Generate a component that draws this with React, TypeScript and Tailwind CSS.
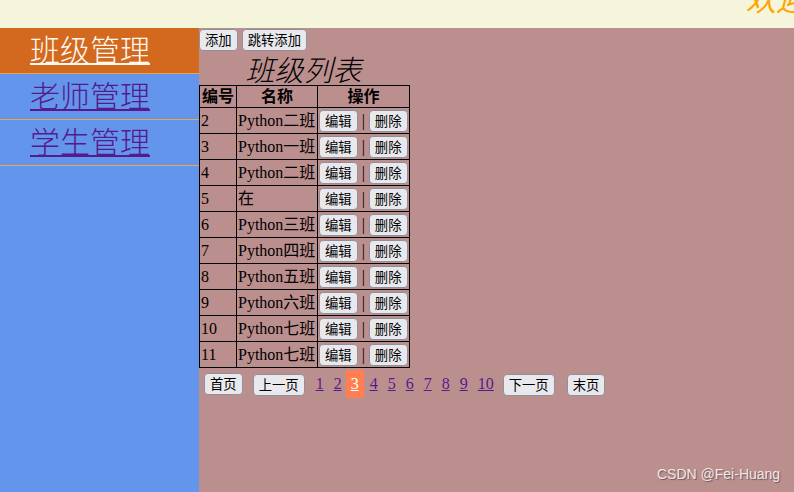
import React from "react";

const rows: [number, string][] = [
  [2, "Python二班"],
  [3, "Python一班"],
  [4, "Python二班"],
  [5, "在"],
  [6, "Python三班"],
  [7, "Python四班"],
  [8, "Python五班"],
  [9, "Python六班"],
  [10, "Python七班"],
  [11, "Python七班"],
];

const serif = "font-['Liberation_Serif','Noto_Sans_CJK_SC',serif]";
const sans = "font-['Noto_Sans_CJK_SC','Liberation_Sans',sans-serif]";

function Btn({ children }: { children: React.ReactNode }) {
  return (
    <button
      className={`${sans} h-[22px] px-[5px] text-[13.33px] leading-[18px] text-black bg-[#e9e9ed] border border-[#8f8f9d] rounded-[4px] align-middle`}
    >
      {children}
    </button>
  );
}

export default function App() {
  return (
    <div className="w-[794px] h-[492px] flex flex-col overflow-hidden">
      <div className="relative h-[28px] bg-[#f5f5dc] overflow-hidden shrink-0">
        <span
          className={`absolute left-[746px] top-[-24px] whitespace-nowrap text-[30px] italic text-[#ffa500] ${sans}`}
        >
          欢迎
        </span>
      </div>
      <div className="flex flex-1">
        <div className="w-[199px] bg-[#6495ed] shrink-0">
          {[
            { t: "班级管理", active: true },
            { t: "老师管理", active: false },
            { t: "学生管理", active: false },
          ].map((it) => (
            <div
              key={it.t}
              className={`h-[46px] border-b border-[#e8a84a] pl-[30px] pb-[5px] flex items-center ${
                it.active ? "bg-[#d2691e]" : ""
              }`}
            >
              <a
                href="#"
                className={`${sans} font-light text-[30px] leading-[36px] underline underline-offset-[2px] decoration-[2px] ${
                  it.active ? "text-[#fff8f0]" : "text-[#551a8b]"
                }`}
              >
                {it.t}
              </a>
            </div>
          ))}
        </div>
        <div className="relative flex-1 bg-[#bc8f8f]">
          <div className="flex gap-[4px] pt-[1px] pl-[0px]">
            <Btn>添加</Btn>
            <Btn>跳转添加</Btn>
          </div>
          <table className={`${serif} text-[16px] text-black border-collapse`}>
            <caption
              className={`${sans} font-light italic text-[29px] leading-[34px] pr-[2px]`}
            >
              班级列表
            </caption>
            <thead>
              <tr>
                <th className="border border-black h-[22px] p-0 leading-[20px] w-[37px]">编号</th>
                <th className="border border-black h-[22px] p-0 leading-[20px] w-[81px]">名称</th>
                <th className="border border-black h-[22px] p-0 leading-[20px] w-[92px]">操作</th>
              </tr>
            </thead>
            <tbody>
              {rows.map(([id, name]) => (
                <tr key={id}>
                  <td className="border border-black h-[26px] p-0 pl-[1px] leading-[20px]">{id}</td>
                  <td className="border border-black h-[26px] p-0 pl-[1px] leading-[20px] whitespace-nowrap">{name}</td>
                  <td className="border border-black h-[26px] p-0 pl-[1px] leading-[20px] whitespace-nowrap">
                    <Btn>编辑</Btn>
                    <span className="mx-[4px] align-middle">|</span>
                    <Btn>删除</Btn>
                  </td>
                </tr>
              ))}
            </tbody>
          </table>
          <div className={`flex items-center pl-[5px] pt-[2px] ${serif} text-[16px]`}>
            <Btn>首页</Btn>
            <span className="ml-[10px]"><Btn>上一页</Btn></span>
            <div className="flex items-center ml-[6px]">
              {[1, 2, 3, 4, 5, 6, 7, 8, 9, 10].map((n) =>
                n === 3 ? (
                  <span
                    key={n}
                    className="bg-[#ff7f50] h-[28px] w-[18px] flex items-center justify-center ml-[-1px] mr-[1px]"
                  >
                    <a href="#" className="text-white underline">{n}</a>
                  </span>
                ) : (
                  <a key={n} href="#" className="text-[#551a8b] underline mx-[5px] leading-[28px]">
                    {n}
                  </a>
                )
              )}
            </div>
            <span className="ml-[4px]"><Btn>下一页</Btn></span>
            <span className="ml-[12px]"><Btn>末页</Btn></span>
          </div>
          <div
            className="absolute left-[458px] top-[436px] text-[14px] text-[#f0e8e8] font-['Liberation_Sans',sans-serif] [text-shadow:1px_1px_1px_#6b5555]"
          >
            CSDN @Fei-Huang
          </div>
        </div>
      </div>
    </div>
  );
}
